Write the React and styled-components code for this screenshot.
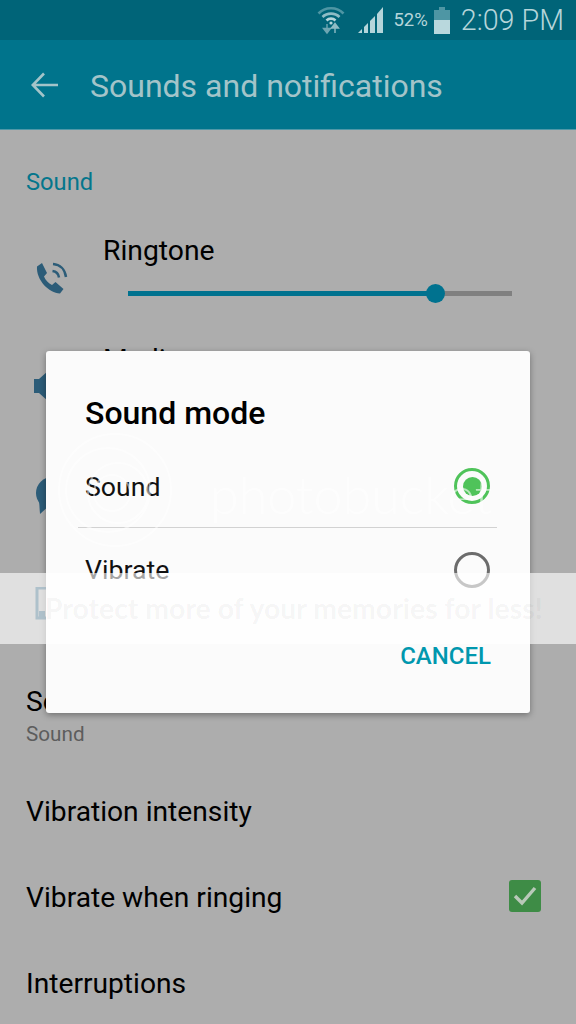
import React from "react";
import styled, { createGlobalStyle } from "styled-components";

const Global = createGlobalStyle`
  html, body { margin: 0; padding: 0; background: #adadad; }
  body { font-family: Roboto, "Liberation Sans", sans-serif; }
`;

const Phone = styled.div`
  position: relative;
  width: 576px;
  height: 1024px;
  overflow: hidden;
  background: #adadad;
  color: #000;
`;

const StatusBar = styled.div`
  height: 40px;
  background: #006478;
  display: flex;
  align-items: center;
  justify-content: flex-end;
  padding-right: 12px;
  color: #b5d5da;
`;
const StatusIcon = styled.svg`
  display: block;
  flex: none;
  margin-right: ${(p) => p.$mr || 0}px;
`;
const Percent = styled.span`
  font-size: 18.5px;
  margin-right: 6px;
`;
const Clock = styled.span`
  font-size: 28.7px;
  font-weight: 300;
  margin-left: 11px;
`;

const AppBar = styled.div`
  height: 89px;
  background: #00748c;
  border-bottom: 1px solid #4f98a8;
  display: flex;
  align-items: center;
  padding-left: 31px;
  gap: 32px;
  color: #a3c4c9;
`;
const AppTitle = styled.h1`
  margin: 2px 0 0;
  font-size: 32px;
  font-weight: 400;
  line-height: 36px;
`;

const SectionLabel = styled.div`
  margin: 37px 0 25px 26px;
  font-size: 23.7px;
  line-height: 30px;
  color: #04768c;
`;

const VolumeRow = styled.div`
  height: 109px;
  display: grid;
  grid-template-columns: 103px 1fr;
`;
const VolumeIcon = styled.div`
  padding: 38px 0 0 34px;
`;
const VolumeBody = styled.div`
  padding-top: 14px;
`;
const VolumeTitle = styled.div`
  font-size: 28.3px;
  line-height: 30px;
`;
const Track = styled.div`
  position: relative;
  margin: 25px 0 0 25px;
  width: 384px;
  height: 5px;
  background: #808080;
`;
const TrackFill = styled.div`
  height: 100%;
  background: #00728f;
`;
const Thumb = styled.div`
  position: absolute;
  top: -7px;
  width: 19px;
  height: 19px;
  margin-left: -9px;
  border-radius: 50%;
  background: #00728f;
`;

const ListRow = styled.div`
  height: 86px;
  display: flex;
  align-items: center;
  justify-content: space-between;
  padding: 0 35px 0 26px;
`;
const SubRow = styled.div`
  height: 111px;
  box-sizing: border-box;
  padding: 29px 26px 0;
`;
const ListTitle = styled.div`
  font-size: 28.2px;
  line-height: 30px;
  font-weight: 400;
`;
const ListSub = styled.div`
  margin-top: 4px;
  font-size: 20.7px;
  line-height: 26px;
  color: #5d5d5d;
`;
const Check = styled.div`
  width: 32px;
  height: 32px;
  margin-bottom: 4px;
  border-radius: 3px;
  background: #3e8c46;
  display: flex;
  align-items: center;
  justify-content: center;
`;

const Dialog = styled.div`
  position: absolute;
  left: 46px;
  top: 351px;
  width: 484px;
  height: 362px;
  background: #fbfbfb;
  border-radius: 3px;
  box-shadow: 0 2px 6px rgba(0, 0, 0, 0.35);
`;
const DialogTitle = styled.h2`
  margin: 0;
  padding: 44px 0 0 39px;
  font-size: 32px;
  line-height: 36px;
  font-weight: 500;
  color: #000;
`;
const Options = styled.div`
  margin: 14px 33px 0 32px;
`;
const Option = styled.div`
  height: 83px;
  box-sizing: border-box;
  display: flex;
  align-items: center;
  justify-content: space-between;
  padding: 0 7px;
  color: #111;
  border-bottom: ${(p) => (p.$divider ? "1px solid #d2d2d2" : "none")};
`;
const OptionLabel = styled.span`
  margin-top: ${(p) => (p.$nudge ? 2 : 0)}px;
  font-size: 26.7px;
`;
const Radio = styled.div`
  width: 36px;
  height: 36px;
  box-sizing: border-box;
  border-radius: 50%;
  border: 3px solid ${(p) => (p.$on ? "#4fc35a" : "#6c6c6c")};
  display: flex;
  align-items: center;
  justify-content: center;
  &::after {
    content: "";
    width: 19px;
    height: 19px;
    border-radius: 50%;
    background: ${(p) => (p.$on ? "#4fc35a" : "transparent")};
  }
`;
const Actions = styled.div`
  margin-top: 30px;
  padding-right: 39px;
  text-align: right;
  font-size: 24px;
  line-height: 30px;
  font-weight: 500;
  color: #0097ae;
`;

const Band = styled.div`
  position: absolute;
  left: 0;
  right: 0;
  top: 573px;
  height: 71px;
  box-sizing: border-box;
  padding: 0 0 2px 45px;
  background: rgba(255, 255, 255, 0.62);
  display: flex;
  align-items: center;
  font-family: Lato, "Open Sans", sans-serif;
  font-size: 28.4px;
  font-weight: 700;
  color: rgba(0, 0, 0, 0.05);
  white-space: nowrap;
`;
const Mark = styled.div`
  position: absolute;
  left: 58px;
  top: 433px;
  display: flex;
  align-items: center;
  gap: 38px;
`;
const MarkText = styled.span`
  font-family: Lato, sans-serif;
  font-size: 52px;
  font-weight: 300;
  line-height: 114px;
  color: rgba(255, 255, 255, 0.6);
  position: relative;
  top: 4px;
`;

const Wifi = () => (
  <StatusIcon $mr={13} width="28" height="30" viewBox="0 0 28 30" fill="none">
    <path d="M1.5 8.5C8 1.5 20 1.5 26.5 8.5" stroke="#4e96a4" strokeWidth="2.6" />
    <path d="M5.5 12C10 7.5 18 7.5 22.5 12" stroke="#8fbcc5" strokeWidth="2.6" />
    <path d="M9.5 15.5C12 13 16 13 18.5 15.5" stroke="#b5d5da" strokeWidth="2.6" />
    <circle cx="14" cy="18" r="1.6" fill="#b5d5da" />
    <path d="M10 19v7M6.5 23.5 10 28l3.5-4.5z" fill="#6ea6b2" stroke="#6ea6b2" strokeWidth="1.4" />
    <path d="M18 28v-8M14.5 23 18 18.5l3.5 4.5z" fill="#8fbcc5" stroke="#8fbcc5" strokeWidth="1.4" />
  </StatusIcon>
);
const Signal = () => (
  <StatusIcon $mr={10} width="25" height="27" viewBox="0 0 25 27" fill="#b5d5da">
    <path d="M0 26 4 22V26z" />
    <path d="M6 20l4-4V26H6z" />
    <path d="M12 14l5-5V26h-5z" />
    <path d="M19 7l6-7V26h-6z" />
  </StatusIcon>
);
const Battery = () => (
  <StatusIcon width="16" height="27" viewBox="0 0 16 27">
    <path d="M5 0h6v3h5v10H0V3h5z" fill="#4e96a4" />
    <rect y="13" width="16" height="14" fill="#b9d8dd" />
  </StatusIcon>
);
const BackArrow = () => (
  <svg width="27" height="26" viewBox="0 0 27 26" fill="none" stroke="#a3c4c9" strokeWidth="2.6">
    <path d="M1.5 13H27M13 1.5 1.8 13 13 24.5" />
  </svg>
);
const PhoneIcon = () => (
  <svg width="36" height="36" viewBox="0 0 36 36" fill="none">
    <path d="M3 6.500 8 3l5 10-3 3.500c1.500 4 4.500 6.500 8 8.500l3.500-3 8 7-3.500 4.500C15 33 2 20 3 6.500z" fill="#2c5c78" />
    <path d="M19 4c7 .5 12 5.500 13 13M18.500 11c3.500 .5 6 3 6.500 6.500" stroke="#2c5c78" strokeWidth="2.500" />
  </svg>
);
const SpeakerIcon = () => (
  <svg width="36" height="36" viewBox="0 0 36 36" fill="#2c5c78">
    <path d="M0 10h5l9-8v30l-9-8H0z" />
  </svg>
);
const BubbleIcon = () => (
  <svg width="36" height="36" viewBox="0 0 36 36" fill="#2c5c78">
    <circle cx="18" cy="15" r="16" />
    <path d="M5 22l1 14 10-9z" />
  </svg>
);
const SystemIcon = () => (
  <svg width="36" height="36" viewBox="0 0 36 36" fill="none">
    <rect x="3" y="1" width="24" height="30" stroke="#2c5c78" strokeWidth="3" />
    <rect x="5" y="24" width="6" height="6" fill="#2c5c78" />
  </svg>
);
const Rings = () => (
  <svg width="114" height="114" viewBox="0 0 114 114" fill="none" stroke="#fff" strokeOpacity="0.5">
    <circle cx="57" cy="57" r="56" strokeWidth="2" />
    <circle cx="50" cy="57" r="42" strokeWidth="2" />
    <circle cx="60" cy="60" r="30" strokeWidth="2" />
    <circle cx="54" cy="60" r="18" strokeWidth="2" />
  </svg>
);

const volumes = [
  { name: "Ringtone", Icon: PhoneIcon, level: 80 },
  { name: "Media", Icon: SpeakerIcon, level: 50 },
  { name: "Notifications", Icon: BubbleIcon, level: 60 },
  { name: "System", Icon: SystemIcon, level: 40 },
];

export default function App() {
  return (
    <Phone>
      <Global />
      <StatusBar>
        <Wifi />
        <Signal />
        <Percent>52%</Percent>
        <Battery />
        <Clock>2:09 PM</Clock>
      </StatusBar>
      <AppBar>
        <BackArrow />
        <AppTitle>Sounds and notifications</AppTitle>
      </AppBar>
      <SectionLabel>Sound</SectionLabel>
      {volumes.map(({ name, Icon, level }) => (
        <VolumeRow key={name}>
          <VolumeIcon>
            <Icon />
          </VolumeIcon>
          <VolumeBody>
            <VolumeTitle>{name}</VolumeTitle>
            <Track>
              <TrackFill style={{ width: `${level}%` }} />
              <Thumb style={{ left: `${level}%` }} />
            </Track>
          </VolumeBody>
        </VolumeRow>
      ))}
      <SubRow>
        <ListTitle>Sound mode</ListTitle>
        <ListSub>Sound</ListSub>
      </SubRow>
      <ListRow>
        <ListTitle>Vibration intensity</ListTitle>
      </ListRow>
      <ListRow>
        <ListTitle>Vibrate when ringing</ListTitle>
        <Check>
          <svg width="24" height="20" viewBox="0 0 24 20" fill="none" stroke="#b9c9b9" strokeWidth="3.4">
            <path d="M2 10l7 7L22 2" />
          </svg>
        </Check>
      </ListRow>
      <ListRow>
        <ListTitle>Interruptions</ListTitle>
      </ListRow>

      <Dialog>
        <DialogTitle>Sound mode</DialogTitle>
        <Options>
          <Option $divider>
            <OptionLabel $nudge>Sound</OptionLabel>
            <Radio $on />
          </Option>
          <Option>
            <OptionLabel>Vibrate</OptionLabel>
            <Radio />
          </Option>
        </Options>
        <Actions>CANCEL</Actions>
      </Dialog>

      <Mark>
        <Rings />
        <MarkText>photobucket</MarkText>
      </Mark>
      <Band>Protect more of your memories for less!</Band>
    </Phone>
  );
}
